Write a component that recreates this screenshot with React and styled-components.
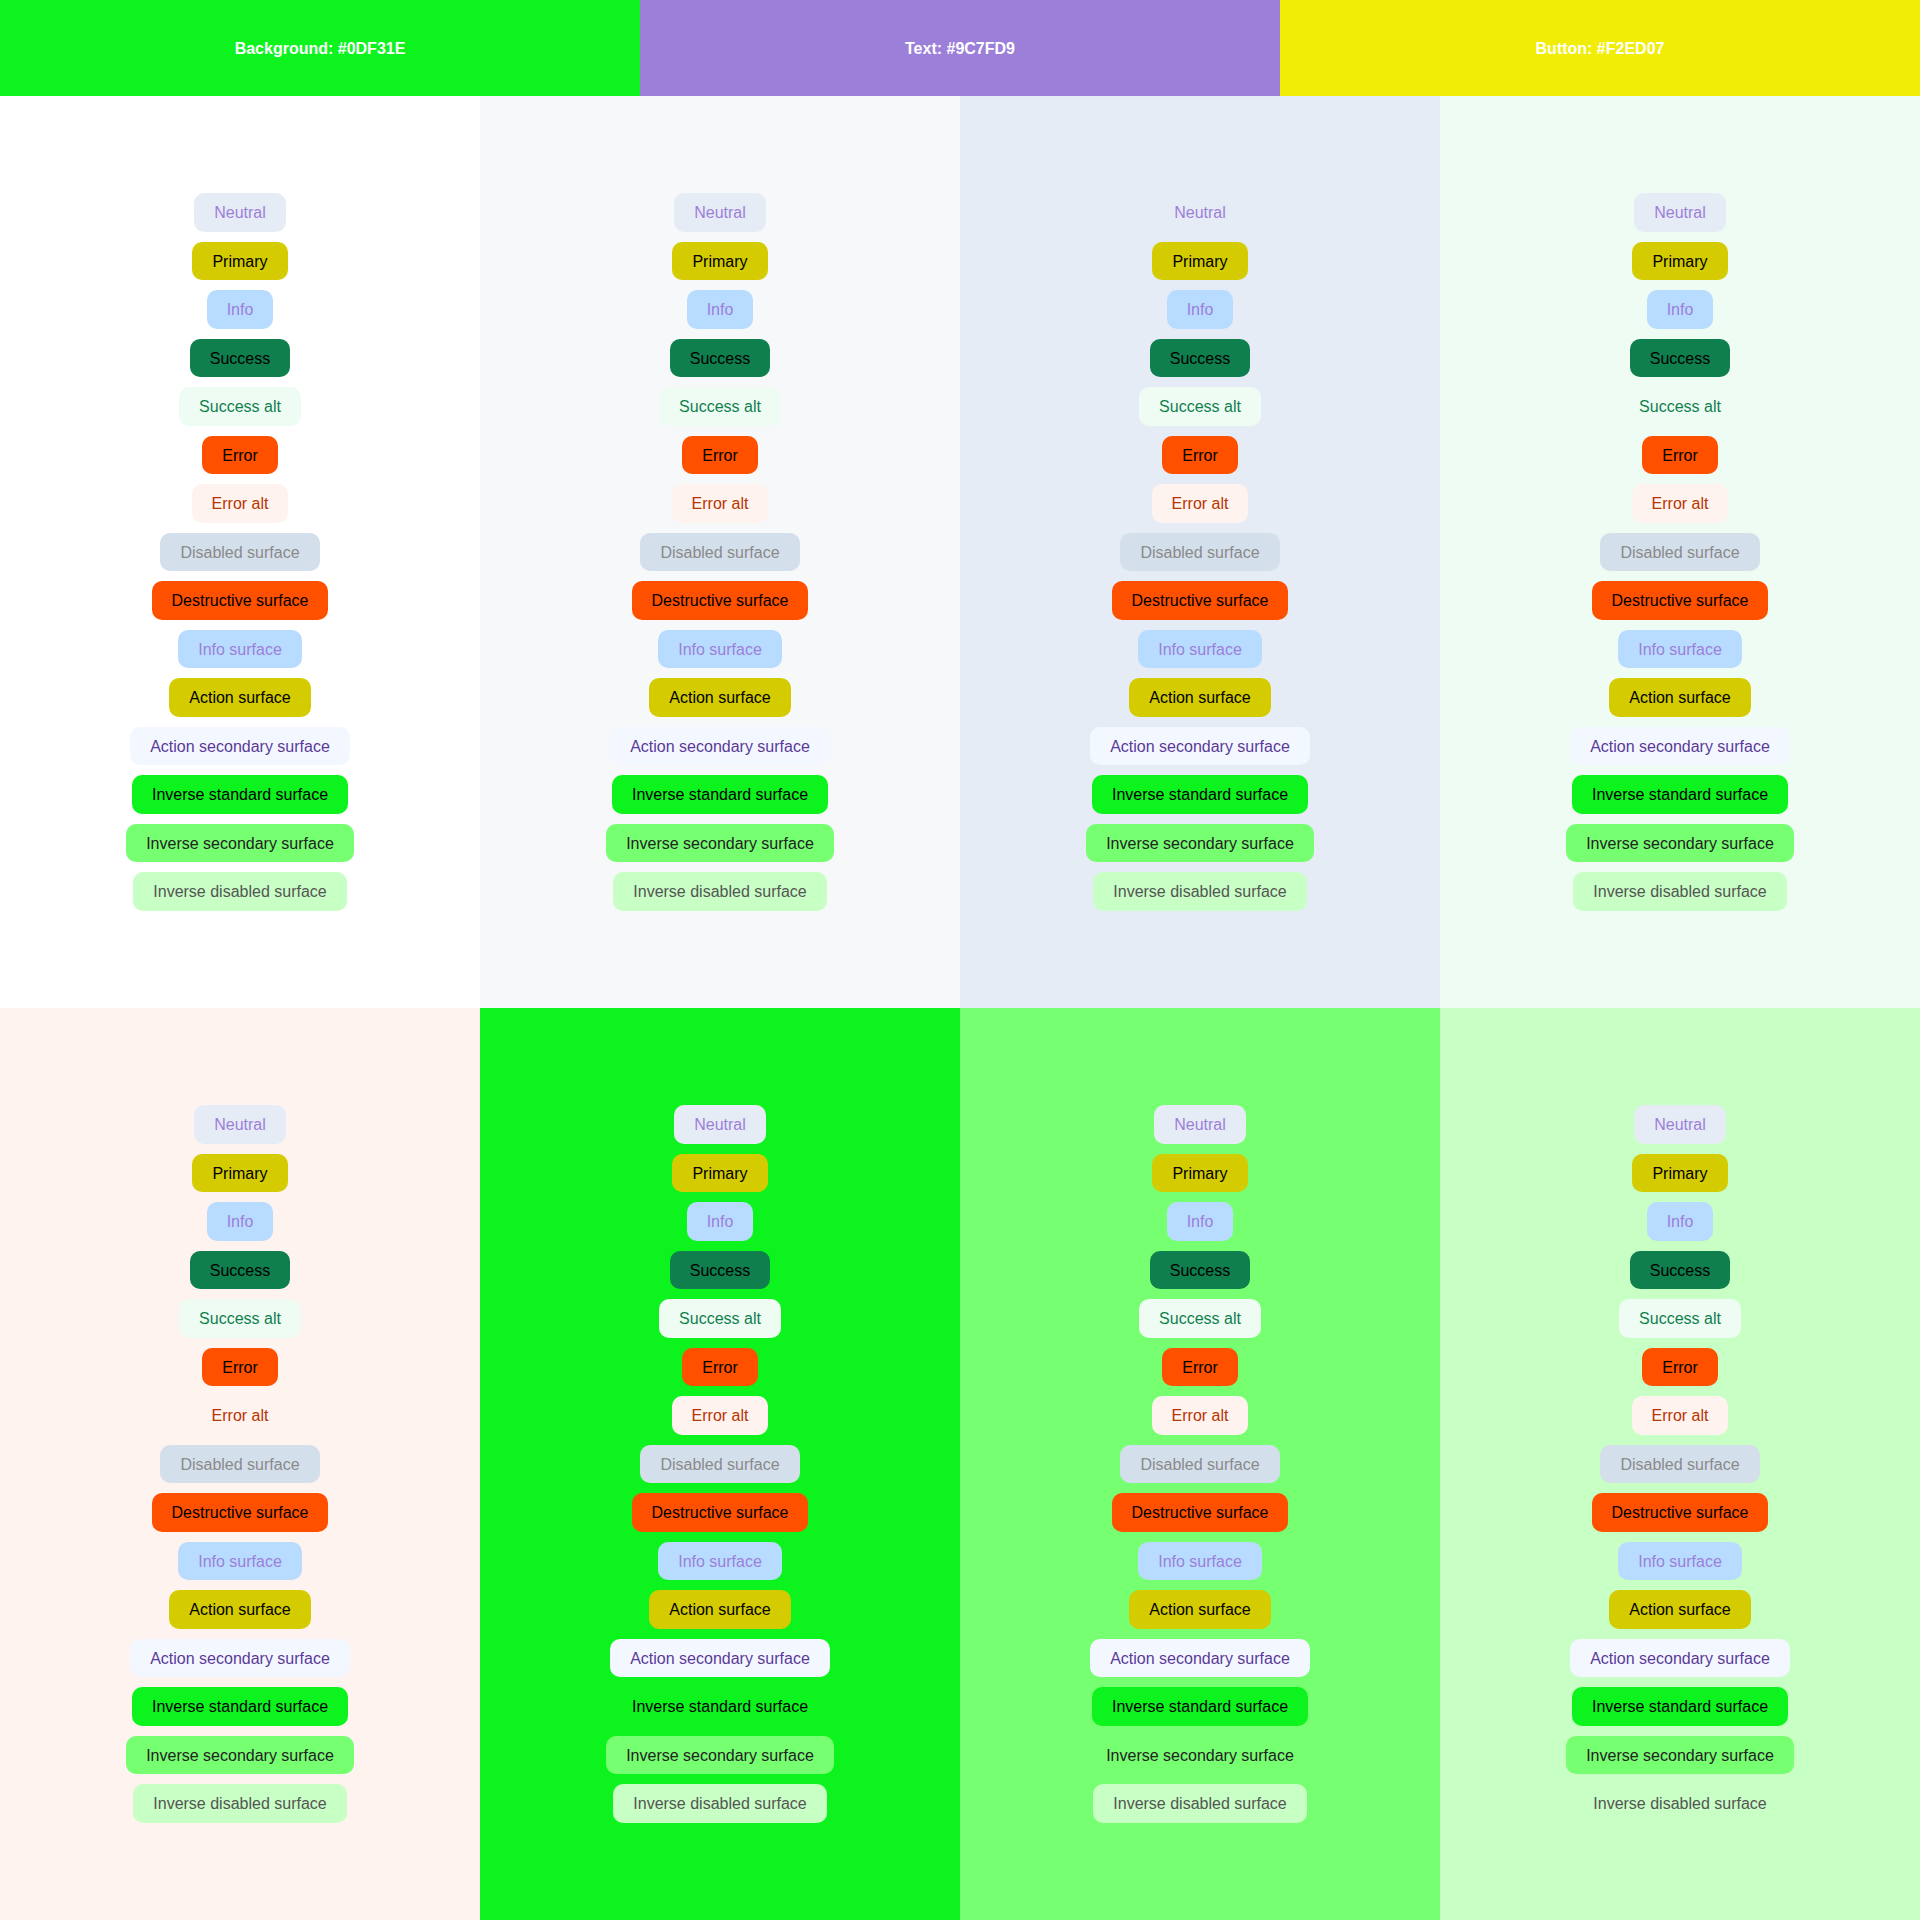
import React from "react";
import styled, { createGlobalStyle } from "styled-components";

const GlobalStyle = createGlobalStyle`
  html, body {
    margin: 0;
    padding: 0;
    background: #fff;
    font-family: "Liberation Sans", Arial, sans-serif;
  }
`;

const swatches = [
  { label: "Background: #0DF31E", color: "#0DF31E" },
  { label: "Text: #9C7FD9", color: "#9C7FD9" },
  { label: "Button: #F2ED07", color: "#F2ED07" },
];

const buttons = [
  { label: "Neutral", bg: "#E6ECF6", fg: "#9C7FD9" },
  { label: "Primary", bg: "#D4CC00", fg: "#000" },
  { label: "Info", bg: "#B8DCFF", fg: "#9C7FD9" },
  { label: "Success", bg: "#0F7F4E", fg: "#000" },
  { label: "Success alt", bg: "#EFFCF4", fg: "#0F7F4E" },
  { label: "Error", bg: "#FF5000", fg: "#000" },
  { label: "Error alt", bg: "#FFF3F0", fg: "#B83300" },
  { label: "Disabled surface", bg: "#D4DFEC", fg: "#8A8A8A" },
  { label: "Destructive surface", bg: "#FF5000", fg: "#000" },
  { label: "Info surface", bg: "#B8DCFF", fg: "#9C7FD9" },
  { label: "Action surface", bg: "#D4CC00", fg: "#000" },
  { label: "Action secondary surface", bg: "#F3F7FF", fg: "#5B3A9B" },
  { label: "Inverse standard surface", bg: "#0DF31E", fg: "#000" },
  { label: "Inverse secondary surface", bg: "#76FF70", fg: "#222" },
  { label: "Inverse disabled surface", bg: "#C8FFC4", fg: "#555" },
];

const panels = [
  "#FFFFFF",
  "#F7F8FA",
  "#E6ECF6",
  "#EFFCF4",
  "#FFF3F0",
  "#0DF31E",
  "#76FF70",
  "#C8FFC4",
];

function App() {
  return (
    <>
      <GlobalStyle />
      <Page>
        <Header>
          {swatches.map((s) => (
            <Swatch key={s.label} $bg={s.color}>
              {s.label}
            </Swatch>
          ))}
        </Header>
        <Grid>
          {panels.map((bg, i) => (
            <Panel key={i} $bg={bg}>
              {buttons.map((b) => (
                <Chip key={b.label} $bg={b.bg} $fg={b.fg}>
                  {b.label}
                </Chip>
              ))}
            </Panel>
          ))}
        </Grid>
      </Page>
    </>
  );
}

export default App;

const Page = styled.div`
  width: 1920px;
  display: flex;
  flex-direction: column;
`;

const Header = styled.div`
  display: flex;
  height: 96px;
`;

const Swatch = styled.div`
  flex: 1;
  display: flex;
  align-items: center;
  justify-content: center;
  padding-top: 2px;
  background: ${(p) => p.$bg};
  color: #fff;
  font-weight: bold;
  font-size: 16px;
`;

const Grid = styled.div`
  display: grid;
  grid-template-columns: repeat(4, 480px);
  grid-template-rows: repeat(2, 912px);
`;

const Panel = styled.div`
  background: ${(p) => p.$bg};
  display: flex;
  flex-direction: column;
  align-items: center;
  justify-content: center;
  gap: 10px;
`;

const Chip = styled.button`
  border: none;
  border-radius: 10px;
  padding: 11px 20px 9px;
  background: ${(p) => p.$bg};
  color: ${(p) => p.$fg};
  font-family: "Liberation Sans", Arial, sans-serif;
  font-size: 16px;
  line-height: 18.5px;
  cursor: pointer;
`;
